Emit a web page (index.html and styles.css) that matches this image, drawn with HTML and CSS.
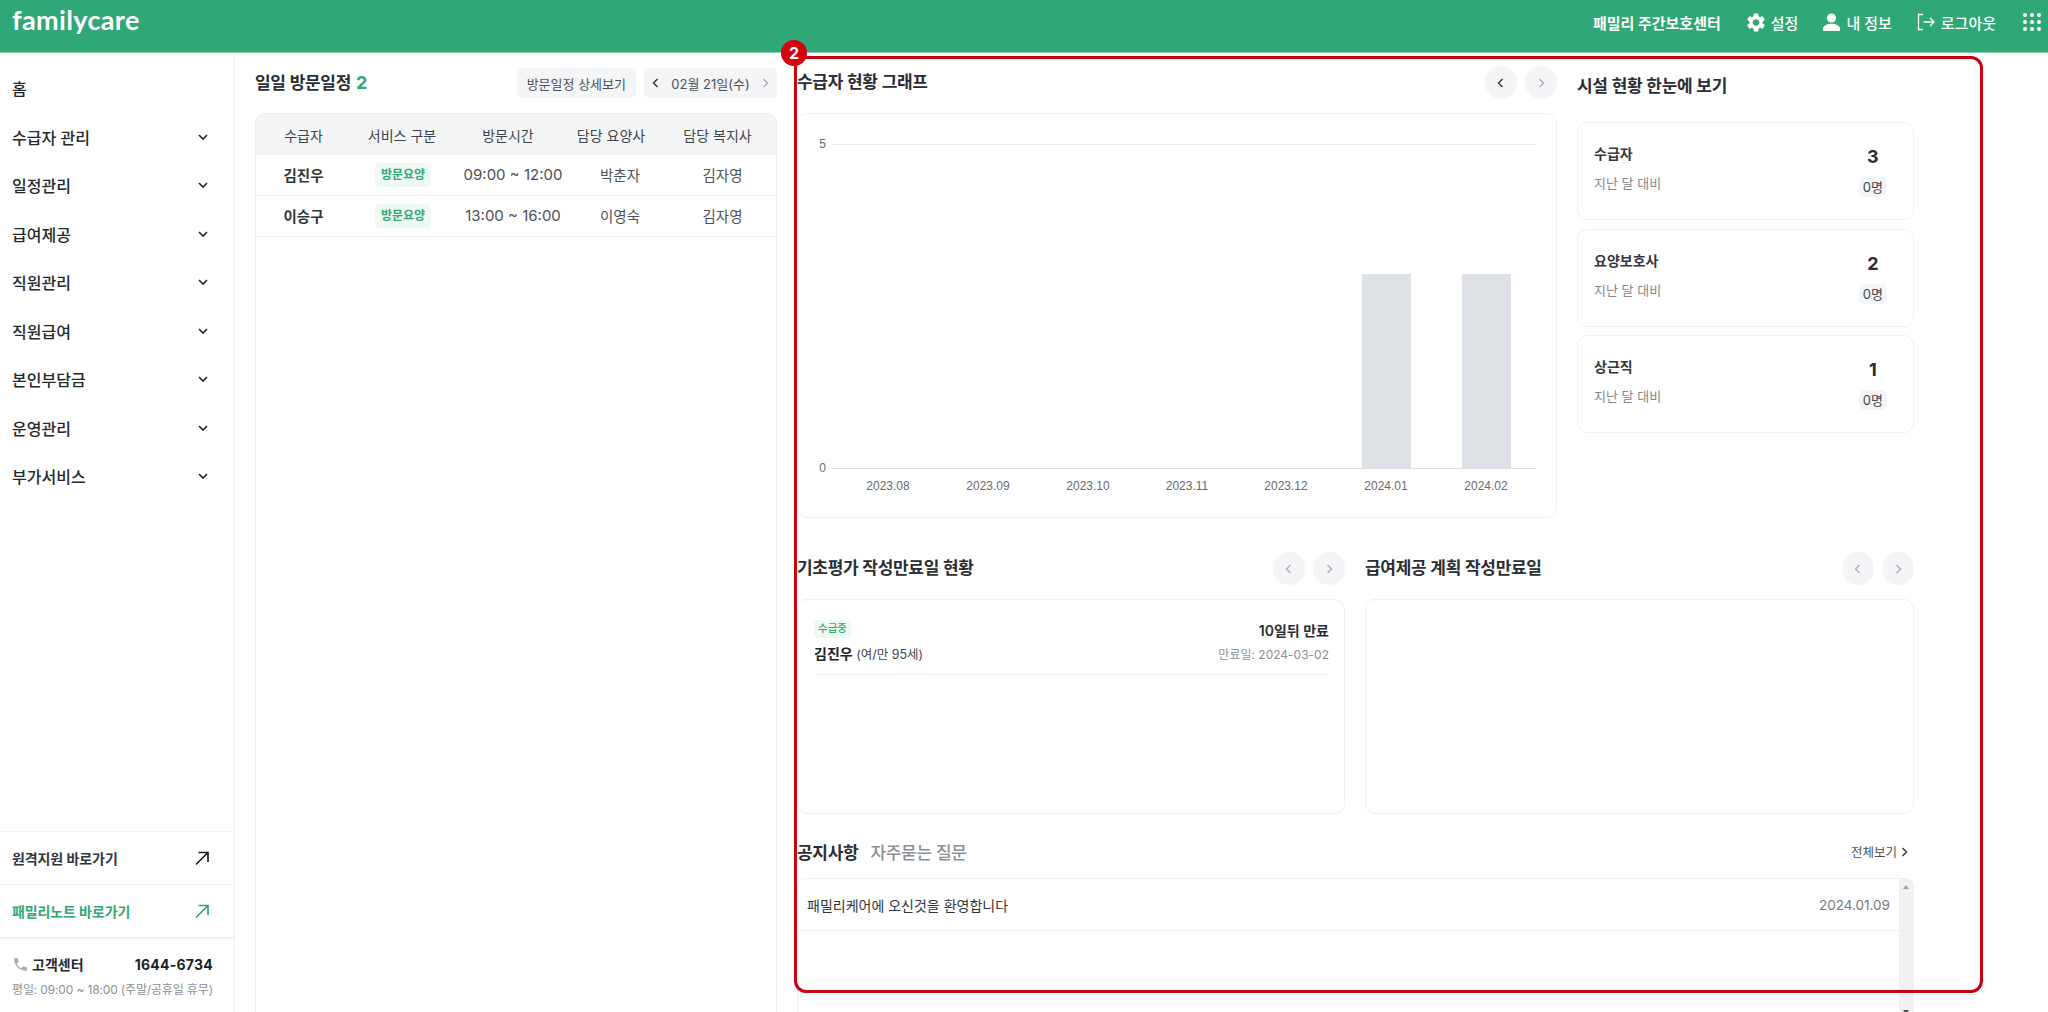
FILE: index.html
```html
<!DOCTYPE html>
<html lang="ko">
<head>
<meta charset="utf-8">
<title>familycare</title>
<link rel="stylesheet" href="styles.css">
</head>
<body>
<svg class="defs" width="0" height="0" aria-hidden="true">
  <symbol id="left" viewBox="0 0 12 12"><path d="M7.5 2 3.5 6l4 4" fill="none" stroke="currentColor" stroke-width="1.3"/></symbol>
  <symbol id="right" viewBox="0 0 12 12"><path d="M4.5 2l4 4-4 4" fill="none" stroke="currentColor" stroke-width="1.3"/></symbol>
  <symbol id="down" viewBox="0 0 12 12"><path d="M2 4l4 4 4-4" fill="none" stroke="currentColor" stroke-width="1.7"/></symbol>
  <symbol id="arrow" viewBox="0 0 16 16"><path d="M2 14.5 14 2.5M4.5 2.5H14V12" fill="none" stroke="currentColor" stroke-width="1.7"/></symbol>
</svg>
<header class="topbar">
  <div class="logo">familycare</div>
  <nav class="topnav">
    <span class="center-name">패밀리 주간보호센터</span>
    <span class="topitem"><svg class="ico-gear" viewBox="2.4 1.8 19.2 20.4"><path fill="currentColor" d="M19.14 12.94c.04-.3.06-.61.06-.94 0-.32-.02-.64-.07-.94l2.03-1.58c.18-.14.23-.41.12-.61l-1.92-3.32c-.12-.22-.37-.29-.59-.22l-2.39.96c-.5-.38-1.03-.7-1.62-.94l-.36-2.54c-.04-.24-.24-.41-.48-.41h-3.84c-.24 0-.43.17-.47.41l-.36 2.54c-.59.24-1.13.57-1.62.94l-2.39-.96c-.22-.08-.47 0-.59.22L2.74 8.87c-.12.21-.08.47.12.61l2.03 1.58c-.05.3-.09.63-.09.94s.02.64.07.94l-2.03 1.58c-.18.14-.23.41-.12.61l1.92 3.32c.12.22.37.29.59.22l2.39-.96c.5.38 1.03.7 1.62.94l.36 2.54c.05.24.24.41.48.41h3.84c.24 0 .44-.17.47-.41l.36-2.54c.59-.24 1.13-.56 1.62-.94l2.39.96c.22.08.47 0 .59-.22l1.92-3.32c.12-.22.07-.47-.12-.61l-2.01-1.58zM12 15.6c-1.98 0-3.6-1.62-3.6-3.6s1.62-3.6 3.6-3.6 3.6 1.62 3.6 3.6-1.62 3.6-3.6 3.6z"/></svg>설정</span>
    <span class="topitem"><svg class="ico-user" viewBox="0 0 17 18"><circle cx="8.5" cy="5" r="4.6" fill="currentColor"/><path fill="currentColor" d="M0 18v-2.4C0 12.4 4.5 10.8 8.5 10.8s8.5 1.6 8.5 4.8V18z"/></svg>내 정보</span>
    <span class="topitem"><svg class="ico-out" viewBox="0 0 18 18"><path d="M6 1.5H1.5v15H6M6.5 9h10.5M13 5l4 4-4 4" fill="none" stroke="currentColor" stroke-width="1.3"/></svg>로그아웃</span>
    <span class="apps"><i></i><i></i><i></i><i></i><i></i><i></i><i></i><i></i><i></i></span>
  </nav>
</header>
<main class="layout">
  <aside class="sidebar">
    <ul class="menu">
      <li class="menu-item">홈</li>
      <li class="menu-item">수급자 관리<svg class="chev"><use href="#down"/></svg></li>
      <li class="menu-item">일정관리<svg class="chev"><use href="#down"/></svg></li>
      <li class="menu-item">급여제공<svg class="chev"><use href="#down"/></svg></li>
      <li class="menu-item">직원관리<svg class="chev"><use href="#down"/></svg></li>
      <li class="menu-item">직원급여<svg class="chev"><use href="#down"/></svg></li>
      <li class="menu-item">본인부담금<svg class="chev"><use href="#down"/></svg></li>
      <li class="menu-item">운영관리<svg class="chev"><use href="#down"/></svg></li>
      <li class="menu-item">부가서비스<svg class="chev"><use href="#down"/></svg></li>
    </ul>
    <div class="side-links">
      <div class="side-link">원격지원 바로가기<svg class="ext"><use href="#arrow"/></svg></div>
      <div class="side-link green">패밀리노트 바로가기<svg class="ext"><use href="#arrow"/></svg></div>
      <div class="support">
        <div class="support-top">
          <span class="support-name"><svg class="phone" viewBox="0 0 24 24"><path fill="currentColor" d="M6.62 10.79c1.44 2.83 3.76 5.14 6.59 6.59l2.2-2.2c.27-.27.67-.36 1.02-.24 1.12.37 2.33.57 3.57.57.55 0 1 .45 1 1V20c0 .55-.45 1-1 1-9.39 0-17-7.61-17-17 0-.55.45-1 1-1h3.5c.55 0 1 .45 1 1 0 1.25.2 2.45.57 3.57.11.35.03.74-.25 1.02l-2.2 2.2z"/></svg>고객센터</span>
          <span class="support-tel">1644-6734</span>
        </div>
        <div class="support-hours">평일: 09:00 ~ 18:00 (주말/공휴일 휴무)</div>
      </div>
    </div>
  </aside>

  <section class="visits">
    <div class="visits-head">
      <h2 class="title">일일 방문일정 <b class="count">2</b></h2>
      <div class="visits-tools">
        <span class="tool">방문일정 상세보기</span>
        <span class="tool date"><svg class="ch12 dark"><use href="#left"/></svg>02월 21일(수)<svg class="ch12 faint"><use href="#right"/></svg></span>
      </div>
    </div>
    <div class="table">
      <div class="thead">
        <span>수급자</span><span>서비스 구분</span><span>방문시간</span><span>담당 요양사</span><span>담당 복지사</span>
      </div>
      <div class="tr">
        <strong>김진우</strong><span><em class="tag">방문요양</em></span><span class="time">09:00 ~ 12:00</span><span>박춘자</span><span>김자영</span>
      </div>
      <div class="tr">
        <strong>이승구</strong><span><em class="tag">방문요양</em></span><span class="time">13:00 ~ 16:00</span><span>이영숙</span><span>김자영</span>
      </div>
    </div>
  </section>

  <section class="dash">
    <div class="dash-top">
      <div class="chart-col">
        <div class="sec-head">
          <h2 class="title">수급자 현황 그래프</h2>
          <div class="pager"><span class="round dark"><svg class="ch12"><use href="#left"/></svg></span><span class="round faint"><svg class="ch12"><use href="#right"/></svg></span></div>
        </div>
        <div class="chart-card">
          <svg class="chart" viewBox="0 0 760 405">
            <line x1="35" y1="31.5" x2="740" y2="31.5" stroke="#e8eaed"/>
            <line x1="35" y1="355.5" x2="740" y2="355.5" stroke="#dfe2e6"/>
            <rect x="565" y="161" width="49" height="194" fill="#dee1e6"/>
            <rect x="665" y="161" width="49" height="194" fill="#dee1e6"/>
            <g class="ylab"><text x="29" y="35">5</text><text x="29" y="359">0</text></g>
            <g class="xlab">
              <text x="91" y="377">2023.08</text><text x="191" y="377">2023.09</text><text x="291" y="377">2023.10</text><text x="390" y="377">2023.11</text><text x="489" y="377">2023.12</text><text x="589" y="377">2024.01</text><text x="689" y="377">2024.02</text>
            </g>
          </svg>
        </div>
      </div>
      <div class="stat-col">
        <h2 class="title stat-title">시설 현황 한눈에 보기</h2>
        <div class="stat"><div><div class="stat-name">수급자</div><div class="stat-sub">지난 달 대비</div></div><div class="stat-val"><b>3</b><span>0명</span></div></div>
        <div class="stat"><div><div class="stat-name">요양보호사</div><div class="stat-sub">지난 달 대비</div></div><div class="stat-val"><b>2</b><span>0명</span></div></div>
        <div class="stat"><div><div class="stat-name">상근직</div><div class="stat-sub">지난 달 대비</div></div><div class="stat-val"><b>1</b><span>0명</span></div></div>
      </div>
    </div>

    <div class="dash-mid">
      <div>
        <div class="sec-head">
          <h2 class="title">기초평가 작성만료일 현황</h2>
          <div class="pager"><span class="round faint"><svg class="ch12"><use href="#left"/></svg></span><span class="round faint"><svg class="ch12"><use href="#right"/></svg></span></div>
        </div>
        <div class="exp-card">
          <div class="exp-row">
            <div><em class="tag small">수급중</em><div class="exp-name"><b>김진우</b> (여/만 95세)</div></div>
            <div class="exp-right"><b>10일뒤 만료</b><span>만료일: 2024-03-02</span></div>
          </div>
        </div>
      </div>
      <div>
        <div class="sec-head">
          <h2 class="title">급여제공 계획 작성만료일</h2>
          <div class="pager"><span class="round faint"><svg class="ch12"><use href="#left"/></svg></span><span class="round faint"><svg class="ch12"><use href="#right"/></svg></span></div>
        </div>
        <div class="exp-card"></div>
      </div>
    </div>

    <div class="notice">
      <div class="notice-head">
        <div class="tabs"><h2 class="title">공지사항</h2><span class="tab-off">자주묻는 질문</span></div>
        <span class="more">전체보기<svg class="ch12 dark"><use href="#right"/></svg></span>
      </div>
      <div class="notice-box">
        <div class="notice-list">
          <div class="notice-row"><span>패밀리케어에 오신것을 환영합니다</span><time>2024.01.09</time></div>
        </div>
        <div class="scrollbar"><i class="up"></i><i class="dn"></i></div>
      </div>
    </div>
  </section>
</main>
<div class="callout"></div>
<div class="callout-num">2</div>
</body>
</html>
```
FILE: styles.css
```css
* { box-sizing: border-box; }
html, body { margin: 0; height: 1012px; overflow: hidden; background: #fff; }
body { font-family: "Inter", "Noto Sans CJK KR", sans-serif; color: #25292e; font-size: 14px; }
.defs { position: absolute; }
h2, ul { margin: 0; padding: 0; list-style: none; }
em { font-style: normal; }

.topbar { height: 53px; background: #30a776; border-bottom: 1px solid #8fd0b4; color: #fff; display: flex; align-items: flex-start; justify-content: space-between; padding: 0 7px 0 12px; }
.logo { font-family: "Lato", sans-serif; font-weight: 700; font-size: 27px; line-height: 40px; letter-spacing: .35px; }
.topnav { display: flex; align-items: center; font-size: 15px; font-weight: 500; height: 44px; }
.center-name { font-weight: 700; margin-right: 26px; }
.topitem { display: flex; align-items: center; gap: 6px; margin-right: 25px; }
.ico-gear { width: 18px; height: 19px; }
.ico-user { width: 17px; height: 18px; }
.ico-out { width: 18px; height: 18px; }
.apps { display: grid; grid-template-columns: repeat(3, 4px); gap: 3px; margin-left: 2px; }
.apps i { width: 4px; height: 4px; border-radius: 50%; background: #fff; }

.layout { display: flex; height: 959px; overflow: hidden; }

.sidebar { width: 235px; flex: none; border-right: 1px solid #f0f1f3; display: flex; flex-direction: column; padding-top: 11px; }
.menu-item { height: 48.5px; padding: 0 25px 0 12px; display: flex; align-items: center; justify-content: space-between; font-size: 16px; font-weight: 500; color: #25292e; }
.chev { width: 12px; height: 12px; color: #25292e; }
.side-links { margin-top: auto; }
.side-link { height: 53px; padding: 0 24px 0 12px; display: flex; align-items: center; justify-content: space-between; border-top: 1px solid #f0f1f3; font-weight: 600; color: #30363c; letter-spacing: -.1px; }
.side-link.green { color: #30a776; font-weight: 700; }
.ext { width: 16px; height: 16px; color: #1a1d20; }
.green .ext { color: #30a776; }
.support { border-top: 2px solid #f0f1f3; padding: 14px 21px 0 12px; height: 75px; }
.support-top { display: flex; justify-content: space-between; align-items: center; height: 22px; }
.support-name { display: flex; align-items: center; gap: 3px; font-weight: 600; font-size: 14px; }
.phone { width: 17px; height: 17px; color: #a6abb0; }
.support-tel { font-weight: 700; font-size: 14px; color: #1c1f22; letter-spacing: .25px; }
.support-hours { margin-top: 5px; font-size: 12px; color: #8b9095; letter-spacing: -.15px; white-space: nowrap; }

.title { font-size: 17px; font-weight: 600; color: #2a2e33; white-space: nowrap; letter-spacing: -.3px; }
.count { color: #30a776; font-weight: 700; font-size: 18px; margin-left: 1px; }

.visits { width: 522px; flex: none; margin-left: 20px; display: flex; flex-direction: column; }
.visits-head { height: 60px; padding-top: 15px; display: flex; justify-content: space-between; align-items: flex-start; }
.visits-head .title { line-height: 30px; }
.visits-tools { display: flex; gap: 8px; }
.tool { height: 30px; border-radius: 5px; background: #f3f5f6; color: #4c5157; font-size: 13px; padding: 0 10px; display: flex; align-items: center; white-space: nowrap; }
.date { gap: 4px; padding: 0 6px; width: 133px; justify-content: space-between; }
.ch12 { width: 12px; height: 12px; flex: none; }
.dark { color: #2a2e33; }
.faint { color: #a8adb3; }
.table { flex: 1; border: 1px solid #eef0f2; border-bottom: 0; border-radius: 10px 10px 0 0; overflow: hidden; }
.thead { height: 41px; background: #f3f5f6; display: grid; grid-template-columns: 95px 102px 110px 96px 117px; align-items: center; text-align: center; font-size: 14px; color: #40454b; }
.tr { height: 41px; padding-bottom: 2px; border-bottom: 1px solid #eef0f2; display: grid; grid-template-columns: 95px 104px 116px 98px 107px; align-items: center; text-align: center; font-size: 14.5px; color: #4b5056; }
.tr .time { font-size: 15px; white-space: nowrap; }
.tr strong { font-weight: 700; color: #30353a; font-size: 14.5px; }
.tag { display: inline-block; margin-top: 2px; background: #eff9f4; color: #30a776; border-radius: 5px; font-size: 12px; font-weight: 600; line-height: 24px; padding: 0 6px; vertical-align: middle; }
.tag.small { margin-top: 0; font-size: 10.5px; font-weight: 500; line-height: 18px; padding: 0 4px; border-radius: 4px; display: block; width: max-content; }

.dash { width: 1118px; flex: none; margin-left: 20px; }
.dash-top { display: grid; grid-template-columns: 760px 337px; gap: 20px; }
.sec-head { height: 60px; display: flex; justify-content: space-between; align-items: flex-start; padding-top: 13px; }
.sec-head .title { line-height: 33px; }
.pager { display: flex; gap: 8px; }
.round { width: 32px; height: 33px; border-radius: 50%; background: #f3f5f6; display: flex; align-items: center; justify-content: center; }
.chart-card { height: 405px; border: 1px solid #f0f1f3; border-radius: 10px; }
.chart { display: block; width: 760px; height: 405px; margin: -1px 0 0 -1px; overflow: visible; }
.chart text { font-family: "Liberation Sans", sans-serif; font-size: 12px; fill: #666b70; }
.ylab text { text-anchor: end; }
.xlab text { text-anchor: middle; }

.stat-title { line-height: 33px; padding-top: 17px; height: 69px; }
.stat { height: 98px; margin-bottom: 8.5px; border: 1px solid #eff0f2; border-radius: 10px; padding: 21px 26px 0 16px; display: flex; justify-content: space-between; }
.stat-name { font-size: 14px; font-weight: 600; color: #34383d; line-height: 20px; }
.stat-sub { font-size: 13px; color: #83888d; margin-top: 9px; line-height: 20px; }
.stat-val { display: flex; flex-direction: column; align-items: center; }
.stat-val b { font-size: 18px; font-weight: 700; color: #2a2e33; line-height: 26px; }
.stat-val span { margin-top: 7px; background: #f3f5f6; border-radius: 5px; font-size: 13px; color: #40454b; line-height: 20px; padding: 0 4px; }

.dash-mid { display: grid; grid-template-columns: 548px 549px; gap: 20px; margin-top: 21px; }
.dash-mid .sec-head { height: 60px; padding-top: 13px; }
.exp-card { height: 215px; border: 1px solid #eff0f2; border-radius: 10px; padding: 20px 15px 0 16px; }
.exp-row { display: flex; justify-content: space-between; height: 55px; border-bottom: 1px solid #f0f1f3; }
.exp-name { font-size: 12.5px; color: #40454b; margin-top: 6px; line-height: 20px; }
.exp-name b { font-size: 14px; color: #1e2125; font-weight: 700; }
.exp-right { display: flex; flex-direction: column; align-items: flex-end; }
.exp-right b { font-size: 14px; font-weight: 600; color: #2a2e33; line-height: 22px; }
.exp-right span { font-size: 12px; color: #8b9095; margin-top: 3px; line-height: 20px; }

.notice { margin-top: 16px; }
.notice-head { height: 43px; margin-bottom: 5px; display: flex; justify-content: space-between; align-items: center; padding-right: 5px; }
.tabs { display: flex; align-items: center; gap: 12px; }
.tab-off { font-size: 17px; color: #8b9095; font-weight: 500; letter-spacing: -.3px; }
.more { font-size: 12.5px; color: #4b5056; display: flex; align-items: center; gap: 1px; }
.notice-box { display: flex; width: 1117px; height: 140px; border-left: 1px solid #eef0f2; border-top: 1px solid #eef0f2; border-radius: 8px 8px 0 0; overflow: hidden; }
.notice-list { flex: 1; }
.notice-row { height: 52px; border-bottom: 1px solid #eef0f2; display: flex; justify-content: space-between; align-items: center; padding: 0 9px; font-size: 14px; color: #30353a; }
.notice-row time { color: #74797e; font-size: 13.5px; }
.scrollbar { width: 15px; flex: none; background: #f1f1f1; position: relative; }
.up, .dn { position: absolute; left: 4px; width: 0; height: 0; border-left: 3.5px solid transparent; border-right: 3.5px solid transparent; }
.up { top: 6px; border-bottom: 4px solid #a3a3a3; }
.dn { bottom: 4px; border-top: 4px solid #505050; }

.callout { position: absolute; left: 794px; top: 56px; width: 1189px; height: 937px; border: 3px solid #c9000f; border-radius: 12px; pointer-events: none; }
.callout-num { position: absolute; left: 781px; top: 39.5px; width: 26px; height: 26px; border-radius: 50%; background: #d6000f; color: #fff; font-weight: 700; font-size: 16px; line-height: 26px; text-align: center; }
```
